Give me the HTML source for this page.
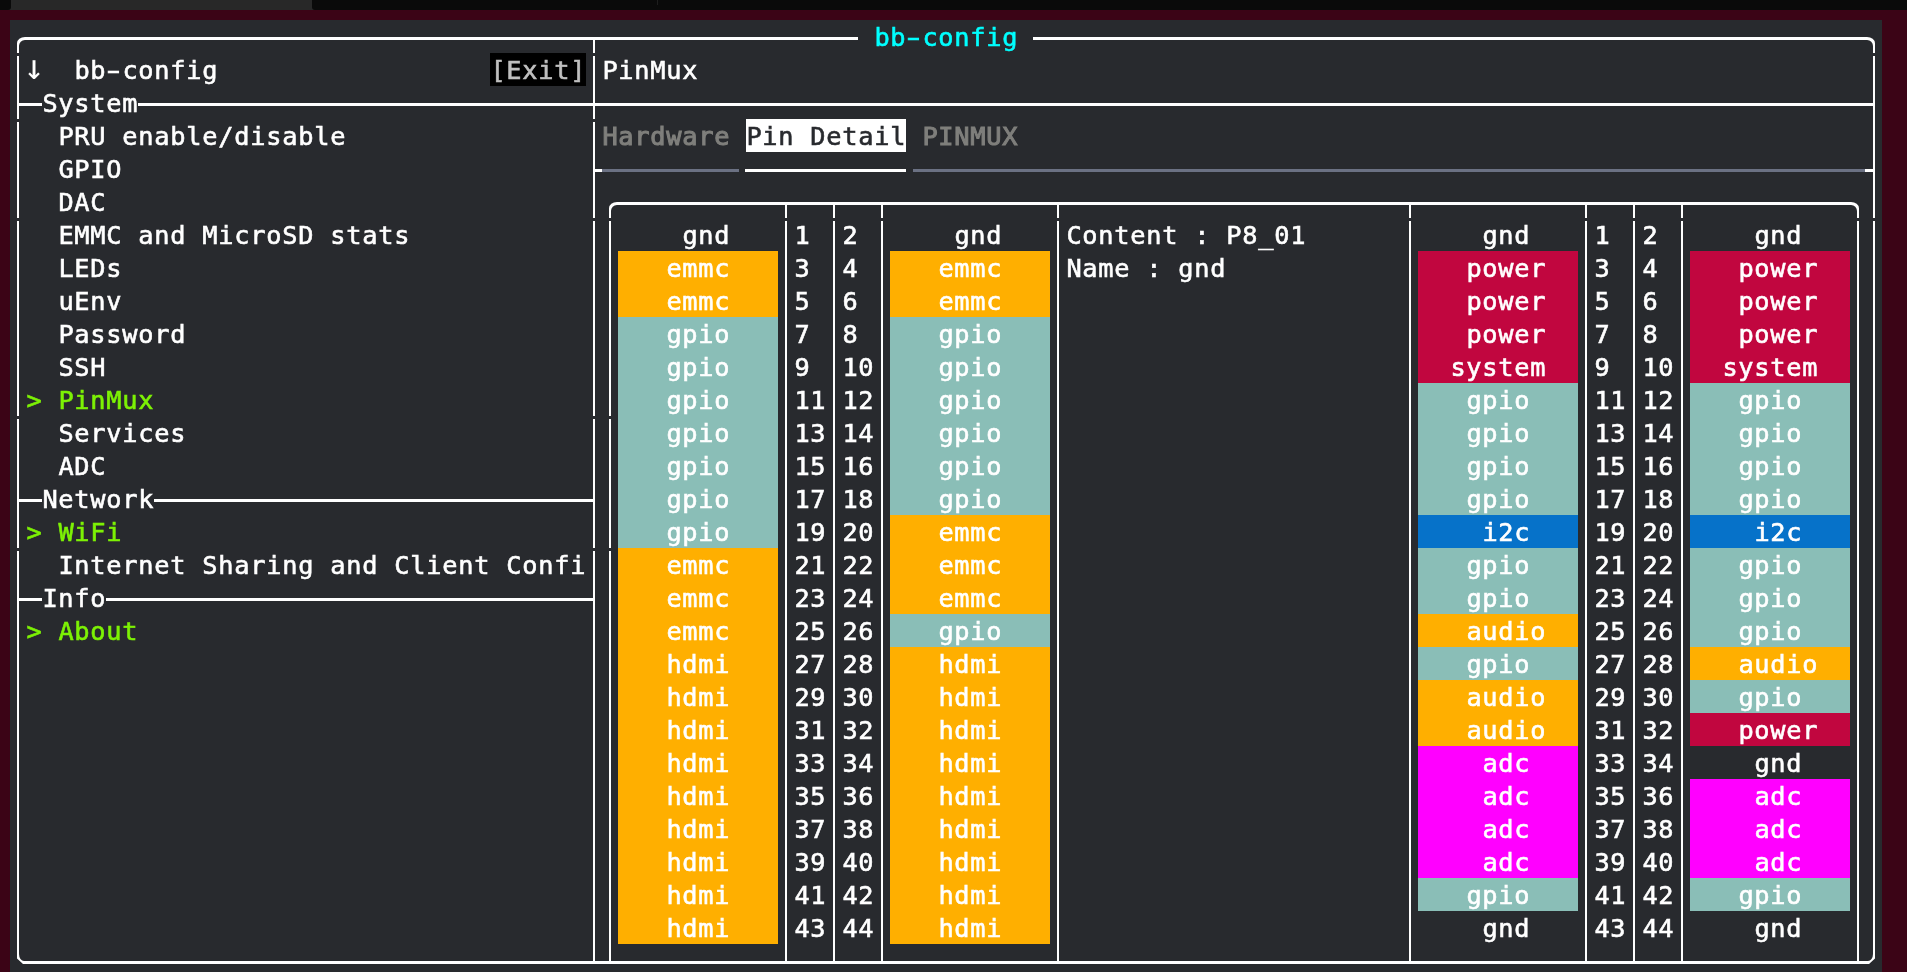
<!DOCTYPE html>
<html lang="en"><head><meta charset="utf-8"><title>bb-config</title>
<style>
html,body{margin:0;padding:0}
body{width:1907px;height:972px;overflow:hidden;background:#3b0416;position:relative}
#strip{position:absolute;left:0;top:0;width:1907px;height:10px;background:#282828}
#strip .l{position:absolute;left:0;top:0;width:11px;height:9.5px;background:#0a0a0a;border-bottom-right-radius:3px}
#strip .r{position:absolute;left:312px;top:0;right:0;height:9.7px;background:#0a0a0a;border-bottom-left-radius:3px}
#strip .d{position:absolute;left:657px;top:0;width:1px;height:5px;background:#1e1e1e}
#term{position:absolute;left:10px;top:20px;width:1872px;height:952px;background:#282a2e;overflow:hidden;
 font-family:"DejaVu Sans Mono","Liberation Mono",monospace;font-size:25.3px;line-height:33px;color:#ffffff}
#term i{position:absolute;display:block}
#term s{display:inline-block;text-decoration:none;transform:scaleX(1.6)}
#tx{position:absolute;left:0;top:0;width:100%;height:100%;will-change:transform}
#term b{position:absolute;display:block;font-weight:normal;white-space:pre;height:33px;line-height:33px;letter-spacing:0.768px;margin-left:0.384px;-webkit-text-stroke:0.6px currentColor;margin-top:1px}
#term u{position:absolute;display:block;box-sizing:border-box;border:0 solid #ffffff;width:9px;height:16px;text-decoration:none}

</style></head><body>
<div id="strip"><div class="l"></div><div class="r"><div class="d" style="left:345px"></div></div></div>
<div id="term">
<i style="left:480px;top:33px;width:96px;height:33px;background:#000000"></i>
<i style="left:736px;top:99px;width:160px;height:33px;background:#ffffff"></i>
<i style="left:608px;top:231px;width:160px;height:66px;background:#ffaf00"></i>
<i style="left:608px;top:297px;width:160px;height:231px;background:#8abeb7"></i>
<i style="left:608px;top:528px;width:160px;height:396px;background:#ffaf00"></i>
<i style="left:880px;top:231px;width:160px;height:66px;background:#ffaf00"></i>
<i style="left:880px;top:297px;width:160px;height:198px;background:#8abeb7"></i>
<i style="left:880px;top:495px;width:160px;height:99px;background:#ffaf00"></i>
<i style="left:880px;top:594px;width:160px;height:33px;background:#8abeb7"></i>
<i style="left:880px;top:627px;width:160px;height:297px;background:#ffaf00"></i>
<i style="left:1408px;top:231px;width:160px;height:132px;background:#c1063f"></i>
<i style="left:1408px;top:363px;width:160px;height:132px;background:#8abeb7"></i>
<i style="left:1408px;top:495px;width:160px;height:33px;background:#0672c9"></i>
<i style="left:1408px;top:528px;width:160px;height:66px;background:#8abeb7"></i>
<i style="left:1408px;top:594px;width:160px;height:33px;background:#ffaf00"></i>
<i style="left:1408px;top:627px;width:160px;height:33px;background:#8abeb7"></i>
<i style="left:1408px;top:660px;width:160px;height:66px;background:#ffaf00"></i>
<i style="left:1408px;top:726px;width:160px;height:132px;background:#ff00ff"></i>
<i style="left:1408px;top:858px;width:160px;height:33px;background:#8abeb7"></i>
<i style="left:1680px;top:231px;width:160px;height:132px;background:#c1063f"></i>
<i style="left:1680px;top:363px;width:160px;height:132px;background:#8abeb7"></i>
<i style="left:1680px;top:495px;width:160px;height:33px;background:#0672c9"></i>
<i style="left:1680px;top:528px;width:160px;height:99px;background:#8abeb7"></i>
<i style="left:1680px;top:627px;width:160px;height:33px;background:#ffaf00"></i>
<i style="left:1680px;top:660px;width:160px;height:33px;background:#8abeb7"></i>
<i style="left:1680px;top:693px;width:160px;height:33px;background:#c1063f"></i>
<i style="left:1680px;top:759px;width:160px;height:99px;background:#ff00ff"></i>
<i style="left:1680px;top:858px;width:160px;height:33px;background:#8abeb7"></i>
<i style="left:16px;top:17px;width:832px;height:3px;background:#ffffff"></i>
<i style="left:1023px;top:17px;width:833px;height:3px;background:#ffffff"></i>
<i style="left:7px;top:83px;width:25px;height:3px;background:#ffffff"></i>
<i style="left:128px;top:83px;width:1737px;height:3px;background:#ffffff"></i>
<i style="left:585px;top:149px;width:7px;height:3px;background:#ffffff"></i>
<i style="left:592px;top:149px;width:137px;height:3px;background:#6b7183"></i>
<i style="left:735px;top:149px;width:161px;height:3px;background:#ffffff"></i>
<i style="left:903px;top:149px;width:952px;height:3px;background:#6b7183"></i>
<i style="left:1855px;top:149px;width:8px;height:3px;background:#ffffff"></i>
<i style="left:608px;top:182px;width:1232px;height:3px;background:#ffffff"></i>
<i style="left:7px;top:479px;width:25px;height:3px;background:#ffffff"></i>
<i style="left:144px;top:479px;width:439px;height:3px;background:#ffffff"></i>
<i style="left:7px;top:578px;width:25px;height:3px;background:#ffffff"></i>
<i style="left:96px;top:578px;width:487px;height:3px;background:#ffffff"></i>
<i style="left:16px;top:941px;width:1840px;height:3px;background:#ffffff"></i>
<i style="left:7px;top:36px;width:2px;height:63px;background:#ffffff"></i>
<i style="left:7px;top:102px;width:2px;height:96px;background:#ffffff"></i>
<i style="left:7px;top:201px;width:2px;height:195px;background:#ffffff"></i>
<i style="left:7px;top:399px;width:2px;height:129px;background:#ffffff"></i>
<i style="left:7px;top:531px;width:2px;height:393px;background:#ffffff"></i>
<i style="left:1863px;top:36px;width:2px;height:162px;background:#ffffff"></i>
<i style="left:1863px;top:201px;width:2px;height:723px;background:#ffffff"></i>
<i style="left:583px;top:17px;width:2px;height:16px;background:#ffffff"></i>
<i style="left:583px;top:36px;width:2px;height:63px;background:#ffffff"></i>
<i style="left:583px;top:102px;width:2px;height:96px;background:#ffffff"></i>
<i style="left:583px;top:201px;width:2px;height:195px;background:#ffffff"></i>
<i style="left:583px;top:399px;width:2px;height:129px;background:#ffffff"></i>
<i style="left:583px;top:531px;width:2px;height:413px;background:#ffffff"></i>
<i style="left:599px;top:201px;width:2px;height:195px;background:#ffffff"></i>
<i style="left:599px;top:399px;width:2px;height:129px;background:#ffffff"></i>
<i style="left:599px;top:531px;width:2px;height:410px;background:#ffffff"></i>
<i style="left:1847px;top:201px;width:2px;height:740px;background:#ffffff"></i>
<i style="left:775px;top:182px;width:2px;height:16px;background:#ffffff"></i>
<i style="left:775px;top:201px;width:2px;height:740px;background:#ffffff"></i>
<i style="left:823px;top:182px;width:2px;height:16px;background:#ffffff"></i>
<i style="left:823px;top:201px;width:2px;height:740px;background:#ffffff"></i>
<i style="left:871px;top:182px;width:2px;height:16px;background:#ffffff"></i>
<i style="left:871px;top:201px;width:2px;height:740px;background:#ffffff"></i>
<i style="left:1047px;top:182px;width:2px;height:16px;background:#ffffff"></i>
<i style="left:1047px;top:201px;width:2px;height:740px;background:#ffffff"></i>
<i style="left:1399px;top:182px;width:2px;height:16px;background:#ffffff"></i>
<i style="left:1399px;top:201px;width:2px;height:740px;background:#ffffff"></i>
<i style="left:1575px;top:182px;width:2px;height:16px;background:#ffffff"></i>
<i style="left:1575px;top:201px;width:2px;height:740px;background:#ffffff"></i>
<i style="left:1623px;top:182px;width:2px;height:16px;background:#ffffff"></i>
<i style="left:1623px;top:201px;width:2px;height:740px;background:#ffffff"></i>
<i style="left:1671px;top:182px;width:2px;height:16px;background:#ffffff"></i>
<i style="left:1671px;top:201px;width:2px;height:740px;background:#ffffff"></i>
<svg style="position:absolute;left:0;top:0" width="1872" height="952" viewBox="0 0 1872 952">
<path fill="#ffffff" d="M7.00 33.00 L7.00 23.30 A8.0 6.3 0 0 1 15.00 17.00 L16.00 17.00 L16.00 20.00 L14.90 20.00 A5.9 6.1 0 0 0 9.00 26.10 L9.00 33.00 Z"/>
<path fill="#ffffff" d="M1865.00 33.00 L1865.00 23.30 A8.0 6.3 0 0 0 1857.00 17.00 L1856.00 17.00 L1856.00 20.00 L1857.10 20.00 A5.9 6.1 0 0 1 1863.00 26.10 L1863.00 33.00 Z"/>
<path fill="#ffffff" d="M7.00 924.00 L7.00 938.60 L13.00 944.00 L16.00 944.00 L16.00 941.00 L14.00 941.00 A5.0 7.0 0 0 1 9.00 934.00 L9.00 924.00 Z"/>
<path fill="#ffffff" d="M1865.00 924.00 L1865.00 938.60 L1859.00 944.00 L1856.00 944.00 L1856.00 941.00 L1858.00 941.00 A5.0 7.0 0 0 0 1863.00 934.00 L1863.00 924.00 Z"/>
<path fill="#ffffff" d="M599.00 198.00 L599.00 188.30 A8.0 6.3 0 0 1 607.00 182.00 L608.00 182.00 L608.00 185.00 L606.90 185.00 A5.9 6.1 0 0 0 601.00 191.10 L601.00 198.00 Z"/>
<path fill="#ffffff" d="M1849.00 198.00 L1849.00 188.30 A8.0 6.3 0 0 0 1841.00 182.00 L1840.00 182.00 L1840.00 185.00 L1841.10 185.00 A5.9 6.1 0 0 1 1847.00 191.10 L1847.00 198.00 Z"/>
</svg>
<div id="tx">
<b style="left:16px;top:33px;font-size:35px;letter-spacing:0;margin-left:-2.5px;margin-top:-2px;-webkit-text-stroke:0">↓</b>
<b style="left:64px;top:33px">bb<s>-</s>config</b>
<b style="left:480px;top:33px;color:#bfbfbf">[Exit]</b>
<b style="left:32px;top:66px">System</b>
<b style="left:48px;top:99px">PRU enable/disable</b>
<b style="left:48px;top:132px">GPIO</b>
<b style="left:48px;top:165px">DAC</b>
<b style="left:48px;top:198px">EMMC and MicroSD stats</b>
<b style="left:48px;top:231px">LEDs</b>
<b style="left:48px;top:264px">uEnv</b>
<b style="left:48px;top:297px">Password</b>
<b style="left:48px;top:330px">SSH</b>
<b style="left:16px;top:363px;color:#7df205">&gt;</b>
<b style="left:48px;top:363px;color:#7df205">PinMux</b>
<b style="left:48px;top:396px">Services</b>
<b style="left:48px;top:429px">ADC</b>
<b style="left:32px;top:462px">Network</b>
<b style="left:16px;top:495px;color:#7df205">&gt;</b>
<b style="left:48px;top:495px;color:#7df205">WiFi</b>
<b style="left:48px;top:528px">Internet Sharing and Client Confi</b>
<b style="left:32px;top:561px">Info</b>
<b style="left:16px;top:594px;color:#7df205">&gt;</b>
<b style="left:48px;top:594px;color:#7df205">About</b>
<b style="left:864px;top:0px;color:#00ffff">bb<s>-</s>config</b>
<b style="left:592px;top:33px">PinMux</b>
<b style="left:592px;top:99px;color:#7f7f7c;-webkit-text-stroke:1.05px currentColor">Hardware</b>
<b style="left:736px;top:99px;color:#282a2e">Pin Detail</b>
<b style="left:912px;top:99px;color:#7f7f7c;-webkit-text-stroke:1.05px currentColor">PINMUX</b>
<b style="left:672px;top:198px">gnd</b>
<b style="left:656px;top:231px">emmc</b>
<b style="left:656px;top:264px">emmc</b>
<b style="left:656px;top:297px">gpio</b>
<b style="left:656px;top:330px">gpio</b>
<b style="left:656px;top:363px">gpio</b>
<b style="left:656px;top:396px">gpio</b>
<b style="left:656px;top:429px">gpio</b>
<b style="left:656px;top:462px">gpio</b>
<b style="left:656px;top:495px">gpio</b>
<b style="left:656px;top:528px">emmc</b>
<b style="left:656px;top:561px">emmc</b>
<b style="left:656px;top:594px">emmc</b>
<b style="left:656px;top:627px">hdmi</b>
<b style="left:656px;top:660px">hdmi</b>
<b style="left:656px;top:693px">hdmi</b>
<b style="left:656px;top:726px">hdmi</b>
<b style="left:656px;top:759px">hdmi</b>
<b style="left:656px;top:792px">hdmi</b>
<b style="left:656px;top:825px">hdmi</b>
<b style="left:656px;top:858px">hdmi</b>
<b style="left:656px;top:891px">hdmi</b>
<b style="left:944px;top:198px">gnd</b>
<b style="left:928px;top:231px">emmc</b>
<b style="left:928px;top:264px">emmc</b>
<b style="left:928px;top:297px">gpio</b>
<b style="left:928px;top:330px">gpio</b>
<b style="left:928px;top:363px">gpio</b>
<b style="left:928px;top:396px">gpio</b>
<b style="left:928px;top:429px">gpio</b>
<b style="left:928px;top:462px">gpio</b>
<b style="left:928px;top:495px">emmc</b>
<b style="left:928px;top:528px">emmc</b>
<b style="left:928px;top:561px">emmc</b>
<b style="left:928px;top:594px">gpio</b>
<b style="left:928px;top:627px">hdmi</b>
<b style="left:928px;top:660px">hdmi</b>
<b style="left:928px;top:693px">hdmi</b>
<b style="left:928px;top:726px">hdmi</b>
<b style="left:928px;top:759px">hdmi</b>
<b style="left:928px;top:792px">hdmi</b>
<b style="left:928px;top:825px">hdmi</b>
<b style="left:928px;top:858px">hdmi</b>
<b style="left:928px;top:891px">hdmi</b>
<b style="left:1472px;top:198px">gnd</b>
<b style="left:1456px;top:231px">power</b>
<b style="left:1456px;top:264px">power</b>
<b style="left:1456px;top:297px">power</b>
<b style="left:1440px;top:330px">system</b>
<b style="left:1456px;top:363px">gpio</b>
<b style="left:1456px;top:396px">gpio</b>
<b style="left:1456px;top:429px">gpio</b>
<b style="left:1456px;top:462px">gpio</b>
<b style="left:1472px;top:495px">i2c</b>
<b style="left:1456px;top:528px">gpio</b>
<b style="left:1456px;top:561px">gpio</b>
<b style="left:1456px;top:594px">audio</b>
<b style="left:1456px;top:627px">gpio</b>
<b style="left:1456px;top:660px">audio</b>
<b style="left:1456px;top:693px">audio</b>
<b style="left:1472px;top:726px">adc</b>
<b style="left:1472px;top:759px">adc</b>
<b style="left:1472px;top:792px">adc</b>
<b style="left:1472px;top:825px">adc</b>
<b style="left:1456px;top:858px">gpio</b>
<b style="left:1472px;top:891px">gnd</b>
<b style="left:1744px;top:198px">gnd</b>
<b style="left:1728px;top:231px">power</b>
<b style="left:1728px;top:264px">power</b>
<b style="left:1728px;top:297px">power</b>
<b style="left:1712px;top:330px">system</b>
<b style="left:1728px;top:363px">gpio</b>
<b style="left:1728px;top:396px">gpio</b>
<b style="left:1728px;top:429px">gpio</b>
<b style="left:1728px;top:462px">gpio</b>
<b style="left:1744px;top:495px">i2c</b>
<b style="left:1728px;top:528px">gpio</b>
<b style="left:1728px;top:561px">gpio</b>
<b style="left:1728px;top:594px">gpio</b>
<b style="left:1728px;top:627px">audio</b>
<b style="left:1728px;top:660px">gpio</b>
<b style="left:1728px;top:693px">power</b>
<b style="left:1744px;top:726px">gnd</b>
<b style="left:1744px;top:759px">adc</b>
<b style="left:1744px;top:792px">adc</b>
<b style="left:1744px;top:825px">adc</b>
<b style="left:1728px;top:858px">gpio</b>
<b style="left:1744px;top:891px">gnd</b>
<b style="left:784px;top:198px">1</b>
<b style="left:832px;top:198px">2</b>
<b style="left:1584px;top:198px">1</b>
<b style="left:1632px;top:198px">2</b>
<b style="left:784px;top:231px">3</b>
<b style="left:832px;top:231px">4</b>
<b style="left:1584px;top:231px">3</b>
<b style="left:1632px;top:231px">4</b>
<b style="left:784px;top:264px">5</b>
<b style="left:832px;top:264px">6</b>
<b style="left:1584px;top:264px">5</b>
<b style="left:1632px;top:264px">6</b>
<b style="left:784px;top:297px">7</b>
<b style="left:832px;top:297px">8</b>
<b style="left:1584px;top:297px">7</b>
<b style="left:1632px;top:297px">8</b>
<b style="left:784px;top:330px">9</b>
<b style="left:832px;top:330px">10</b>
<b style="left:1584px;top:330px">9</b>
<b style="left:1632px;top:330px">10</b>
<b style="left:784px;top:363px">11</b>
<b style="left:832px;top:363px">12</b>
<b style="left:1584px;top:363px">11</b>
<b style="left:1632px;top:363px">12</b>
<b style="left:784px;top:396px">13</b>
<b style="left:832px;top:396px">14</b>
<b style="left:1584px;top:396px">13</b>
<b style="left:1632px;top:396px">14</b>
<b style="left:784px;top:429px">15</b>
<b style="left:832px;top:429px">16</b>
<b style="left:1584px;top:429px">15</b>
<b style="left:1632px;top:429px">16</b>
<b style="left:784px;top:462px">17</b>
<b style="left:832px;top:462px">18</b>
<b style="left:1584px;top:462px">17</b>
<b style="left:1632px;top:462px">18</b>
<b style="left:784px;top:495px">19</b>
<b style="left:832px;top:495px">20</b>
<b style="left:1584px;top:495px">19</b>
<b style="left:1632px;top:495px">20</b>
<b style="left:784px;top:528px">21</b>
<b style="left:832px;top:528px">22</b>
<b style="left:1584px;top:528px">21</b>
<b style="left:1632px;top:528px">22</b>
<b style="left:784px;top:561px">23</b>
<b style="left:832px;top:561px">24</b>
<b style="left:1584px;top:561px">23</b>
<b style="left:1632px;top:561px">24</b>
<b style="left:784px;top:594px">25</b>
<b style="left:832px;top:594px">26</b>
<b style="left:1584px;top:594px">25</b>
<b style="left:1632px;top:594px">26</b>
<b style="left:784px;top:627px">27</b>
<b style="left:832px;top:627px">28</b>
<b style="left:1584px;top:627px">27</b>
<b style="left:1632px;top:627px">28</b>
<b style="left:784px;top:660px">29</b>
<b style="left:832px;top:660px">30</b>
<b style="left:1584px;top:660px">29</b>
<b style="left:1632px;top:660px">30</b>
<b style="left:784px;top:693px">31</b>
<b style="left:832px;top:693px">32</b>
<b style="left:1584px;top:693px">31</b>
<b style="left:1632px;top:693px">32</b>
<b style="left:784px;top:726px">33</b>
<b style="left:832px;top:726px">34</b>
<b style="left:1584px;top:726px">33</b>
<b style="left:1632px;top:726px">34</b>
<b style="left:784px;top:759px">35</b>
<b style="left:832px;top:759px">36</b>
<b style="left:1584px;top:759px">35</b>
<b style="left:1632px;top:759px">36</b>
<b style="left:784px;top:792px">37</b>
<b style="left:832px;top:792px">38</b>
<b style="left:1584px;top:792px">37</b>
<b style="left:1632px;top:792px">38</b>
<b style="left:784px;top:825px">39</b>
<b style="left:832px;top:825px">40</b>
<b style="left:1584px;top:825px">39</b>
<b style="left:1632px;top:825px">40</b>
<b style="left:784px;top:858px">41</b>
<b style="left:832px;top:858px">42</b>
<b style="left:1584px;top:858px">41</b>
<b style="left:1632px;top:858px">42</b>
<b style="left:784px;top:891px">43</b>
<b style="left:832px;top:891px">44</b>
<b style="left:1584px;top:891px">43</b>
<b style="left:1632px;top:891px">44</b>
<b style="left:1056px;top:198px">Content : P8_01</b>
<b style="left:1056px;top:231px">Name : gnd</b>
</div>
</div></body></html>
